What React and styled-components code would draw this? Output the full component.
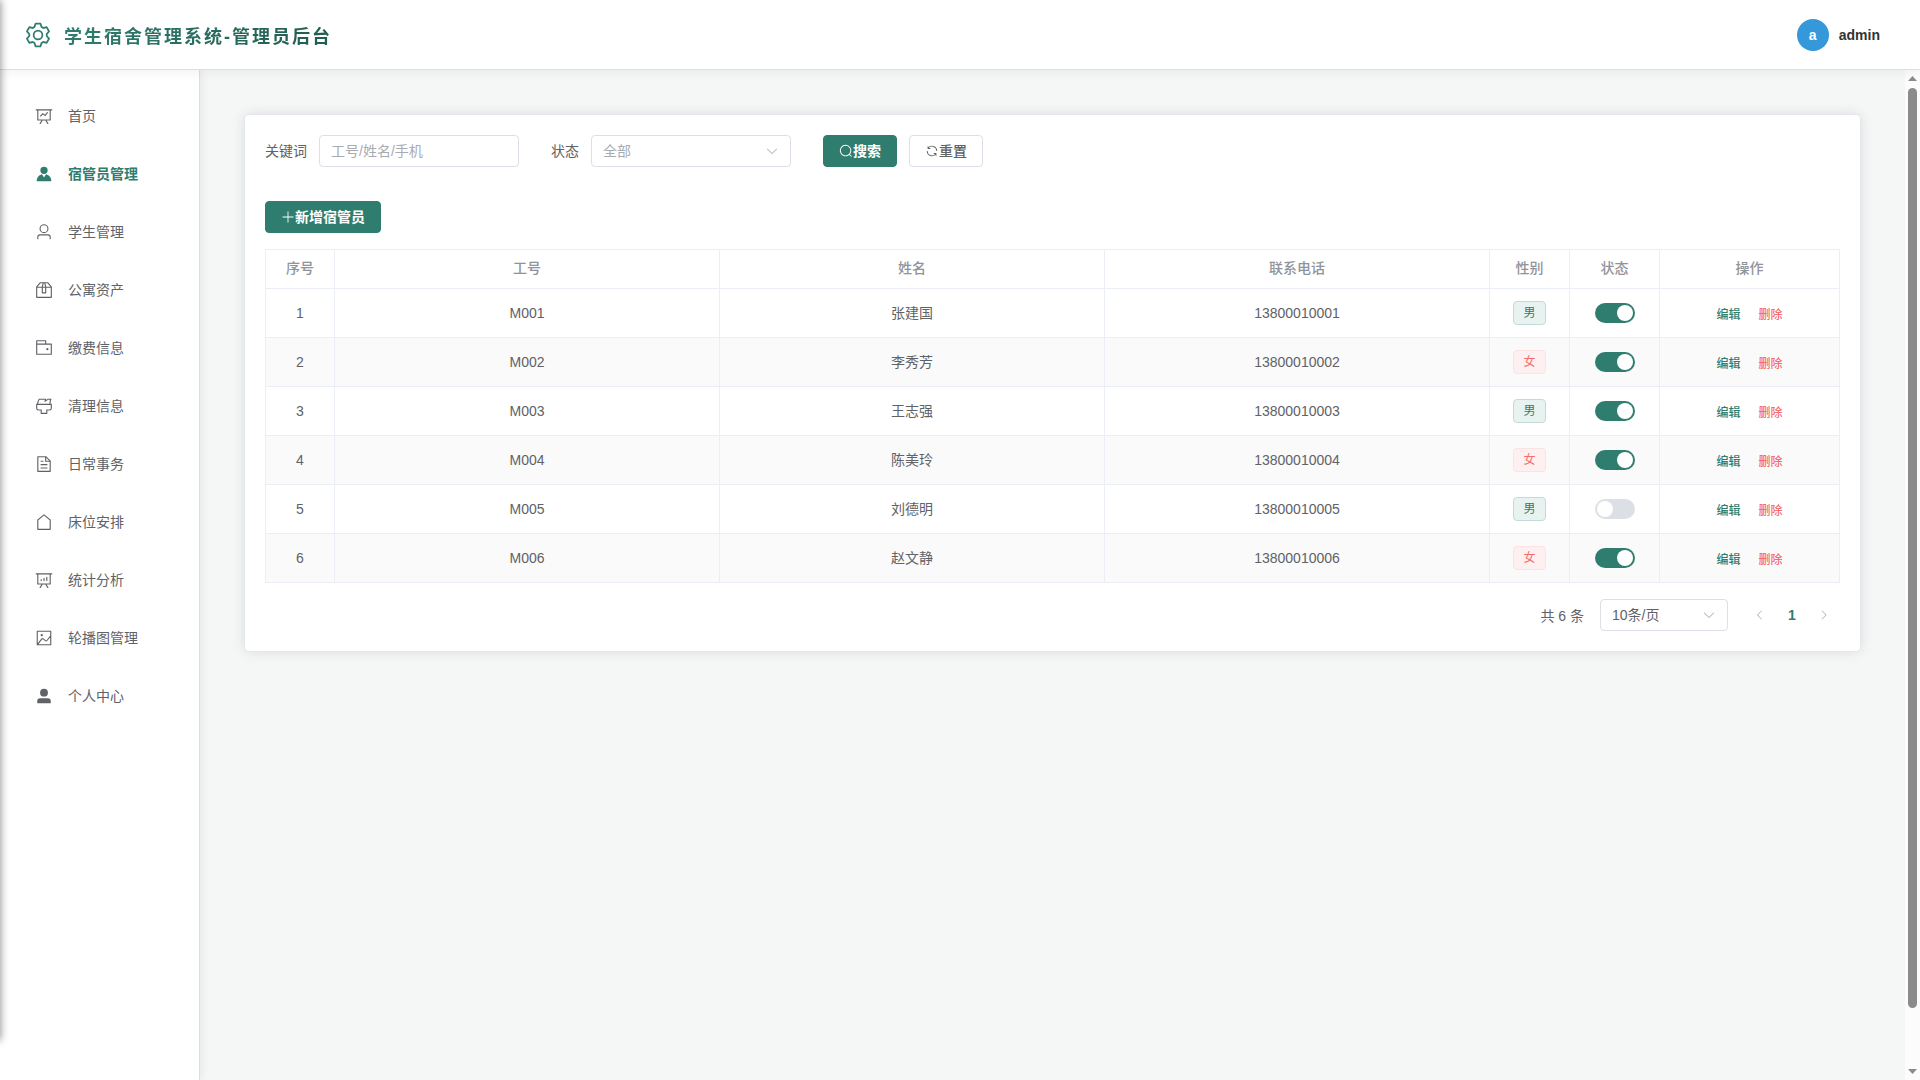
import React, { useState } from "react";
import styled, { createGlobalStyle } from "styled-components";

const icons = {
  setting:
    "M600.704 64a32 32 0 0 1 30.464 22.208l35.2 109.376c14.784 7.232 28.928 15.36 42.432 24.512l112.384-24.192a32 32 0 0 1 34.432 15.36L944.32 364.8a32 32 0 0 1-4.032 37.504l-77.12 85.12a357.12 357.12 0 0 1 0 49.024l77.12 85.248a32 32 0 0 1 4.032 37.504l-88.704 153.6a32 32 0 0 1-34.432 15.296L708.8 803.904c-13.44 9.088-27.648 17.28-42.368 24.512l-35.264 109.376A32 32 0 0 1 600.704 960H423.296a32 32 0 0 1-30.464-22.208L357.696 828.48a351.616 351.616 0 0 1-42.56-24.64l-112.32 24.256a32 32 0 0 1-34.432-15.36L79.68 659.2a32 32 0 0 1 4.032-37.504l77.12-85.248a357.12 357.12 0 0 1 0-48.896l-77.12-85.248A32 32 0 0 1 79.68 364.8l88.704-153.6a32 32 0 0 1 34.432-15.296l112.32 24.256c13.568-9.152 27.776-17.408 42.56-24.64l35.2-109.312A32 32 0 0 1 423.232 64H600.64zm-23.424 64H446.72l-36.352 113.088-24.512 11.968a294.113 294.113 0 0 0-34.816 20.096l-22.656 15.36-116.224-25.088-65.28 113.152 79.68 88.192-1.92 27.136a293.12 293.12 0 0 0 0 40.192l1.92 27.136-79.808 88.192 65.344 113.152 116.224-25.024 22.656 15.296a294.113 294.113 0 0 0 34.816 20.096l24.512 11.968L446.72 896h130.688l36.48-113.152 24.448-11.904a288.282 288.282 0 0 0 34.752-20.096l22.592-15.296 116.288 25.024 65.28-113.152-79.744-88.192 1.92-27.136a293.12 293.12 0 0 0 0-40.256l-1.92-27.136 79.808-88.128-65.344-113.152-116.288 24.96-22.592-15.232a287.616 287.616 0 0 0-34.752-20.096l-24.448-11.904L577.344 128zM512 320a192 192 0 1 1 0 384 192 192 0 0 1 0-384zm0 64a128 128 0 1 0 0 256 128 128 0 0 0 0-256z",
  dataLine:
    "M359.168 768H160a32 32 0 0 1-32-32V192H64a32 32 0 0 1 0-64h896a32 32 0 1 1 0 64h-64v544a32 32 0 0 1-32 32H665.216l110.848 192h-73.856L591.36 768H433.024L322.176 960H248.32l110.848-192zM832 192H192v512h640V192zM342.656 534.656a32 32 0 1 1-45.312-45.312L444.992 341.76l125.44 94.08L679.04 300.032a32 32 0 1 1 49.92 39.936L581.632 524.224 451.008 426.24 342.656 534.592z",
  avatar:
    "M628.736 528.896A416 416 0 0 1 928 928H96a415.872 415.872 0 0 1 299.264-399.104L512 704l116.736-175.104zM720 304a208 208 0 1 1-416 0 208 208 0 0 1 416 0z",
  user: "M512 512a192 192 0 1 0 0-384 192 192 0 0 0 0 384zm0 64a256 256 0 1 1 0-512 256 256 0 0 1 0 512zm320 320v-96a96 96 0 0 0-96-96H288a96 96 0 0 0-96 96v96a32 32 0 1 1-64 0v-96a160 160 0 0 1 160-160h448a160 160 0 0 1 160 160v96a32 32 0 1 1-64 0z",
  box: "M317.056 128 128 344.064V896h768V344.064L706.944 128H317.056zm-14.528-64h418.944a32 32 0 0 1 24.064 10.88l206.528 236.096A32 32 0 0 1 960 332.032V928a32 32 0 0 1-32 32H96a32 32 0 0 1-32-32V332.032a32 32 0 0 1 7.936-21.12L278.4 75.008A32 32 0 0 1 302.528 64z M64 320h896v64H64z M448 327.872V640h128V327.872L526.08 128h-28.16L448 327.872zM448 64h128l64 256v352a32 32 0 0 1-32 32H416a32 32 0 0 1-32-32V320l64-256z",
  wallet:
    "M640 288h-64V128H128v704h384v32a32 32 0 0 0 32 32H96a32 32 0 0 1-32-32V96a32 32 0 0 1 32-32h512a32 32 0 0 1 32 32v192z M128 320v512h768V320H128zm-32-64h832a32 32 0 0 1 32 32v576a32 32 0 0 1-32 32H96a32 32 0 0 1-32-32V288a32 32 0 0 1 32-32z M704 640a64 64 0 1 1 0-128 64 64 0 0 1 0 128z",
  brush:
    "M896 448H128v192a64 64 0 0 0 64 64h192v192h256V704h192a64 64 0 0 0 64-64V448zm-770.752-64c0-47.552 5.248-90.24 15.552-128 14.72-54.016 42.496-107.392 83.2-160h417.28l-15.36 70.336L736 96h211.2c-24.832 42.88-41.92 96.256-51.2 160a663.872 663.872 0 0 0-6.144 128H960v256a128 128 0 0 1-128 128H704v160a32 32 0 0 1-32 32H352a32 32 0 0 1-32-32V768H192A128 128 0 0 1 64 640V384h61.248zm64 0h636.544c-2.048-45.824.256-91.584 6.848-137.216 4.48-30.848 10.688-59.776 18.688-86.784h-96.64l-221.12 141.248L561.92 160H256.512c-25.856 37.888-43.776 75.456-53.952 112.832-8.768 32.064-13.248 69.12-13.312 111.168z",
  document:
    "M832 384H576V128H192v768h640V384zm-26.496-64L640 154.496V320h165.504zM160 64h480l256 256v608a32 32 0 0 1-32 32H160a32 32 0 0 1-32-32V96a32 32 0 0 1 32-32zm160 448h384v64H320v-64zm0-192h160v64H320v-64zm0 384h384v64H320v-64z",
  house:
    "M192 413.952V896h640V413.952L512 147.328 192 413.952zM139.52 374.4l352-293.312a32 32 0 0 1 40.96 0l352 293.312A32 32 0 0 1 896 398.976V928a32 32 0 0 1-32 32H160a32 32 0 0 1-32-32V398.976a32 32 0 0 1 11.52-24.576z",
  dataAnalysis:
    "m665.216 768 110.848 192h-73.856L591.36 768H433.024L322.176 960H248.32l110.848-192H160a32 32 0 0 1-32-32V192H64a32 32 0 0 1 0-64h896a32 32 0 1 1 0 64h-64v544a32 32 0 0 1-32 32H665.216zM832 192H192v512h640V192zM352 448a32 32 0 0 1 32 32v64a32 32 0 0 1-64 0v-64a32 32 0 0 1 32-32zm160-64a32 32 0 0 1 32 32v128a32 32 0 0 1-64 0V416a32 32 0 0 1 32-32zm160-64a32 32 0 0 1 32 32v192a32 32 0 1 1-64 0V352a32 32 0 0 1 32-32z",
  picture:
    "M160 160v704h704V160H160zm-32-64h768a32 32 0 0 1 32 32v768a32 32 0 0 1-32 32H128a32 32 0 0 1-32-32V128a32 32 0 0 1 32-32z M384 288q64 0 64 64t-64 64q-64 0-64-64t64-64zM185.408 876.992l-50.816-38.912L350.72 556.032a96 96 0 0 1 134.592-17.856l1.856 1.472 122.88 99.136a32 32 0 0 0 44.992-4.864l216-269.888 49.92 39.936-215.808 269.824-.256.32a96 96 0 0 1-135.04 14.464l-122.88-99.072-.64-.512a32 32 0 0 0-44.8 5.952L185.408 876.992z",
  userFilled:
    "M288 320a224 224 0 1 0 448 0 224 224 0 1 0-448 0zm544 608H160a32 32 0 0 1-32-32v-96a160 160 0 0 1 160-160h448a160 160 0 0 1 160 160v96a32 32 0 0 1-32 32z",
  search:
    "m795.904 750.72 124.992 124.928a32 32 0 0 1-45.248 45.248L750.656 795.904a416 416 0 1 1 45.248-45.248zM480 832a352 352 0 1 0 0-704 352 352 0 0 0 0 704z",
  refresh:
    "M771.776 794.88A384 384 0 0 1 128 512h64a320 320 0 0 0 555.712 216.448H654.72a32 32 0 1 1 0-64h149.056a32 32 0 0 1 32 32v148.928a32 32 0 1 1-64 0v-50.56zM276.288 295.616h92.992a32 32 0 0 1 0 64H220.16a32 32 0 0 1-32-32V178.56a32 32 0 0 1 64 0v50.56A384 384 0 0 1 896.128 512h-64a320 320 0 0 0-555.776-216.384z",
  plus: "M480 480V128a32 32 0 0 1 64 0v352h352a32 32 0 1 1 0 64H544v352a32 32 0 1 1-64 0V544H128a32 32 0 0 1 0-64h352z",
  arrowDown:
    "M831.872 340.864 512 652.672 192.128 340.864a30.592 30.592 0 0 0-42.752 0 29.12 29.12 0 0 0 0 41.6L489.664 714.24a32 32 0 0 0 44.672 0l340.288-331.712a29.12 29.12 0 0 0 0-41.728 30.592 30.592 0 0 0-42.752 0z",
  arrowLeft:
    "M609.408 149.376 277.76 489.6a32 32 0 0 0 0 44.672l331.648 340.352a29.12 29.12 0 0 0 41.728 0 30.592 30.592 0 0 0 0-42.752L339.264 511.936l311.872-319.872a30.592 30.592 0 0 0 0-42.688 29.12 29.12 0 0 0-41.728 0z",
  arrowRight:
    "M340.864 149.312a30.592 30.592 0 0 0 0 42.752L652.736 512 340.864 831.872a30.592 30.592 0 0 0 0 42.752 29.12 29.12 0 0 0 41.728 0L714.24 534.336a32 32 0 0 0 0-44.672L382.592 149.376a29.12 29.12 0 0 0-41.728 0z",
};

const menu = [
  { icon: "dataLine", label: "首页" },
  { icon: "avatar", label: "宿管员管理" },
  { icon: "user", label: "学生管理" },
  { icon: "box", label: "公寓资产" },
  { icon: "wallet", label: "缴费信息" },
  { icon: "brush", label: "清理信息" },
  { icon: "document", label: "日常事务" },
  { icon: "house", label: "床位安排" },
  { icon: "dataAnalysis", label: "统计分析" },
  { icon: "picture", label: "轮播图管理" },
  { icon: "userFilled", label: "个人中心" },
];

const initialManagers = [
  { code: "M001", name: "张建国", phone: "13800010001", gender: "男", enabled: true },
  { code: "M002", name: "李秀芳", phone: "13800010002", gender: "女", enabled: true },
  { code: "M003", name: "王志强", phone: "13800010003", gender: "男", enabled: true },
  { code: "M004", name: "陈美玲", phone: "13800010004", gender: "女", enabled: true },
  { code: "M005", name: "刘德明", phone: "13800010005", gender: "男", enabled: false },
  { code: "M006", name: "赵文静", phone: "13800010006", gender: "女", enabled: true },
];

const Icon = ({ name, size = 14 }) => (
  <svg
    viewBox="0 0 1024 1024"
    width={size}
    height={size}
    fill="currentColor"
    aria-hidden="true"
  >
    <path d={icons[name]} />
  </svg>
);

export default function App() {
  const [active, setActive] = useState("宿管员管理");
  const [keyword, setKeyword] = useState("");
  const [status, setStatus] = useState("");
  const [managers, setManagers] = useState(initialManagers);

  const toggleManager = (code) => {
    setManagers((prev) =>
      prev.map((m) => (m.code === code ? { ...m, enabled: !m.enabled } : m))
    );
  };
  const handleReset = () => {
    setKeyword("");
    setStatus("");
  };

  return (
    <Shell>
      <GlobalStyle />
      <EdgeShadow />
      <Header>
        <Brand>
          <Icon name="setting" size={28} />
          <h1>学生宿舍管理系统-管理员后台</h1>
        </Brand>
        <UserInfo>
          <span className="avatar">a</span>
          <span className="username">admin</span>
        </UserInfo>
      </Header>
      <Body>
        <Sidebar>
          {menu.map((item) => (
            <MenuItem
              key={item.label}
              href="#"
              $active={item.label === active}
              onClick={() => setActive(item.label)}
            >
              <Icon name={item.icon} size={18} />
              {item.label}
            </MenuItem>
          ))}
        </Sidebar>
        <Main>
          <Card>
            <SearchForm onSubmit={(e) => e.preventDefault()}>
              <Field>
                <label htmlFor="keyword">关键词</label>
                <TextInput
                  id="keyword"
                  type="text"
                  placeholder="工号/姓名/手机"
                  value={keyword}
                  onChange={(e) => setKeyword(e.target.value)}
                />
              </Field>
              <Field>
                <label htmlFor="status">状态</label>
                <SelectBox $width={200} $empty={status === ""}>
                  <select
                    id="status"
                    value={status}
                    onChange={(e) => setStatus(e.target.value)}
                  >
                    <option value="">全部</option>
                    <option value="1">启用</option>
                    <option value="0">禁用</option>
                  </select>
                  <Icon name="arrowDown" />
                </SelectBox>
              </Field>
              <ButtonGroup>
                <Button type="submit" $primary>
                  <Icon name="search" />
                  搜索
                </Button>
                <Button type="button" onClick={handleReset}>
                  <Icon name="refresh" />
                  重置
                </Button>
              </ButtonGroup>
            </SearchForm>
            <Toolbar>
              <Button type="button" $primary>
                <Icon name="plus" />
                新增宿管员
              </Button>
            </Toolbar>
            <Table>
              <colgroup>
                <col width="70" />
                <col />
                <col />
                <col />
                <col width="80" />
                <col width="90" />
                <col width="180" />
              </colgroup>
              <thead>
                <tr>
                  <th>序号</th>
                  <th>工号</th>
                  <th>姓名</th>
                  <th>联系电话</th>
                  <th>性别</th>
                  <th>状态</th>
                  <th>操作</th>
                </tr>
              </thead>
              <tbody>
                {managers.map((m, index) => (
                  <tr key={m.code}>
                    <td>{index + 1}</td>
                    <td>{m.code}</td>
                    <td>{m.name}</td>
                    <td>{m.phone}</td>
                    <td>
                      <Tag $danger={m.gender === "女"}>{m.gender}</Tag>
                    </td>
                    <td>
                      <Switch
                        type="checkbox"
                        role="switch"
                        aria-label={m.name}
                        checked={m.enabled}
                        onChange={() => toggleManager(m.code)}
                      />
                    </td>
                    <td>
                      <Actions>
                        <LinkButton type="button">编辑</LinkButton>
                        <LinkButton type="button" $danger>
                          删除
                        </LinkButton>
                      </Actions>
                    </td>
                  </tr>
                ))}
              </tbody>
            </Table>
            <Pagination>
              <span className="total">共 {managers.length} 条</span>
              <SelectBox $width={128}>
                <select aria-label="每页条数" defaultValue="10">
                  <option value="10">10条/页</option>
                  <option value="20">20条/页</option>
                  <option value="50">50条/页</option>
                </select>
                <Icon name="arrowDown" />
              </SelectBox>
              <Pager>
                <button type="button" aria-label="上一页" disabled>
                  <Icon name="arrowLeft" size={12} />
                </button>
                <button type="button" className="current">
                  1
                </button>
                <button type="button" aria-label="下一页" disabled>
                  <Icon name="arrowRight" size={12} />
                </button>
              </Pager>
            </Pagination>
          </Card>
        </Main>
        <Scrollbar>
          <svg width="9" height="5" viewBox="0 0 9 5" aria-hidden="true">
            <path d="M4.5 0L9 5H0z" />
          </svg>
          <div className="track">
            <div className="thumb" />
            <div className="rest" />
          </div>
          <svg width="9" height="5" viewBox="0 0 9 5" aria-hidden="true">
            <path d="M0 0h9L4.5 5z" />
          </svg>
        </Scrollbar>
      </Body>
    </Shell>
  );
}

const GlobalStyle = createGlobalStyle`
  * {
    box-sizing: border-box;
  }
  body {
    margin: 0;
    font-family: "Liberation Sans", "Noto Sans CJK SC", sans-serif;
    font-size: 14px;
    line-height: 22px;
    color: #606266;
    background: #f4f7f6;
  }
  button, input, select {
    font-family: inherit;
    font-size: 14px;
    margin: 0;
  }
  button {
    line-height: inherit;
  }
  svg {
    display: block;
    flex-shrink: 0;
  }
`;

const Shell = styled.div`
  display: flex;
  flex-direction: column;
  height: 100vh;
  overflow: hidden;
`;

const EdgeShadow = styled.div`
  position: fixed;
  top: 0;
  bottom: 40px;
  left: -8px;
  width: 8px;
  z-index: 10;
  box-shadow: 0 0 8px rgba(0, 0, 0, 0.5);
`;

const Header = styled.header`
  display: flex;
  flex-shrink: 0;
  justify-content: space-between;
  align-items: center;
  height: 70px;
  padding: 0 40px 0 24px;
  background: #fff;
  border-bottom: 1px solid #d5e3e0;
  box-shadow: 0 2px 12px rgba(0, 0, 0, 0.06);
  position: relative;
  z-index: 2;
`;

const Brand = styled.div`
  display: flex;
  align-items: center;
  gap: 12px;
  color: #2f7d6e;
  h1 {
    margin: 0;
    font-size: 18px;
    line-height: normal;
    font-weight: 700;
    letter-spacing: 2px;
    background: linear-gradient(90deg, #2f7d6e, #225c51);
    background-clip: text;
    color: transparent;
  }
`;

const UserInfo = styled.div`
  display: flex;
  align-items: center;
  gap: 10px;
  font-weight: 700;
  .avatar {
    display: flex;
    align-items: center;
    justify-content: center;
    width: 32px;
    height: 32px;
    border-radius: 50%;
    background: #3498db;
    color: #fff;
  }
  .username {
    color: #333;
  }
`;

const Body = styled.div`
  display: flex;
  flex: 1;
  min-height: 0;
`;

const Sidebar = styled.nav`
  display: flex;
  flex-direction: column;
  gap: 8px;
  flex-shrink: 0;
  width: 200px;
  padding: 21px 0;
  background: #fff;
  border-right: 1px solid #d5e3e0;
  box-shadow: 2px 0 8px rgba(0, 0, 0, 0.06);
  position: relative;
  z-index: 1;
`;

const MenuItem = styled.a`
  display: flex;
  align-items: center;
  gap: 15px;
  height: 50px;
  padding: 0 35px;
  text-decoration: none;
  white-space: nowrap;
  color: ${({ $active }) => ($active ? "#2f7d6e" : "#606266")};
  font-weight: ${({ $active }) => ($active ? 700 : 400)};
`;

const Main = styled.main`
  flex: 1;
  min-width: 0;
  padding: 45px;
  overflow: hidden;
`;

const Card = styled.section`
  padding: 20px;
  background: #fff;
  border-radius: 4px;
  box-shadow: 0 0 0 1px #e4e7ed, 0 0 14px rgba(0, 0, 0, 0.12);
`;

const SearchForm = styled.form`
  display: flex;
  flex-wrap: wrap;
  gap: 32px;
`;

const Field = styled.div`
  display: flex;
  align-items: center;
  gap: 12px;
`;

const TextInput = styled.input`
  width: 200px;
  height: 32px;
  padding: 0 11px;
  border: 1px solid #dcdfe6;
  border-radius: 4px;
  outline: none;
  color: #606266;
  &::placeholder {
    color: #a8abb2;
    opacity: 1;
  }
`;

const SelectBox = styled.div`
  display: grid;
  align-items: center;
  width: ${({ $width }) => $width}px;
  select,
  svg {
    grid-area: 1 / 1;
  }
  select {
    width: 100%;
    height: 32px;
    padding: 0 32px 0 11px;
    appearance: none;
    border: 1px solid #dcdfe6;
    border-radius: 4px;
    outline: none;
    background: #fff;
    color: ${({ $empty }) => ($empty ? "#a8abb2" : "#606266")};
  }
  svg {
    justify-self: end;
    margin-right: 12px;
    color: #a8abb2;
    pointer-events: none;
  }
`;

const ButtonGroup = styled.div`
  display: flex;
  gap: 12px;
`;

const Button = styled.button`
  display: inline-flex;
  align-items: center;
  justify-content: center;
  height: 32px;
  padding: 0 15px;
  border: 1px solid ${({ $primary }) => ($primary ? "#2f7d6e" : "#dcdfe6")};
  border-radius: 4px;
  background: ${({ $primary }) => ($primary ? "#2f7d6e" : "#fff")};
  color: ${({ $primary }) => ($primary ? "#fff" : "#606266")};
  font-weight: ${({ $primary }) => ($primary ? 700 : 500)};
  cursor: pointer;
`;

const Toolbar = styled.div`
  display: flex;
  margin: 34px 0 16px;
`;

const Table = styled.table`
  width: 100%;
  table-layout: fixed;
  border-spacing: 0;
  border-top: 1px solid #ebeef5;
  text-align: center;
  th,
  td {
    padding: 0 12px;
    border: solid #ebeef5;
    border-width: 0 1px 1px 0;
    &:first-child {
      border-left-width: 1px;
    }
  }
  th {
    height: 39px;
    padding-bottom: 2px;
    color: #909399;
    font-weight: 500;
  }
  td {
    height: 49px;
  }
  tbody tr:nth-child(even) {
    background: #fafafa;
  }
`;

const Tag = styled.span`
  display: inline-flex;
  align-items: center;
  justify-content: center;
  height: 24px;
  padding: 0 9px;
  border: 1px solid ${({ $danger }) => ($danger ? "#fde2e2" : "#c1dcd6")};
  border-radius: 4px;
  background: ${({ $danger }) => ($danger ? "#fef0f0" : "#e8f3f1")};
  color: ${({ $danger }) => ($danger ? "#f56c6c" : "#2f7d6e")};
  font-size: 12px;
  vertical-align: middle;
`;

const Switch = styled.input`
  display: flex;
  align-items: center;
  width: 40px;
  height: 20px;
  margin: 0 auto;
  padding: 2px;
  appearance: none;
  border-radius: 10px;
  background: #dcdfe6;
  cursor: pointer;
  &::before {
    content: "";
    width: 16px;
    height: 16px;
    border-radius: 50%;
    background: #fff;
  }
  &:checked {
    justify-content: flex-end;
    background: #2f7d6e;
  }
`;

const Actions = styled.div`
  display: flex;
  justify-content: center;
  gap: 18px;
`;

const LinkButton = styled.button`
  padding: 0;
  border: 0;
  background: none;
  color: ${({ $danger }) => ($danger ? "#f56c6c" : "#2f7d6e")};
  && {
    font-size: 12px;
    line-height: normal;
  }
  font-weight: 500;
  cursor: pointer;
`;

const Pagination = styled.div`
  display: flex;
  align-items: center;
  justify-content: flex-end;
  gap: 16px;
  margin-top: 16px;
  .total {
    line-height: normal;
  }
`;

const Pager = styled.div`
  display: flex;
  button {
    display: flex;
    align-items: center;
    justify-content: center;
    width: 32px;
    height: 32px;
    padding: 0;
    border: 0;
    background: none;
    color: #a8abb2;
  }
  .current {
    color: #2f7d6e;
    font-weight: 700;
  }
`;

const Scrollbar = styled.div`
  display: flex;
  flex-direction: column;
  align-items: center;
  flex-shrink: 0;
  gap: 7px;
  width: 15px;
  padding: 6px 0;
  background: #fcfcfc;
  fill: #8b8b8b;
  .track {
    display: flex;
    flex-direction: column;
    flex: 1;
    width: 9px;
  }
  .thumb {
    flex: 17;
    border-radius: 5px;
    background: #8b8b8b;
  }
  .rest {
    flex: 1;
  }
`;
